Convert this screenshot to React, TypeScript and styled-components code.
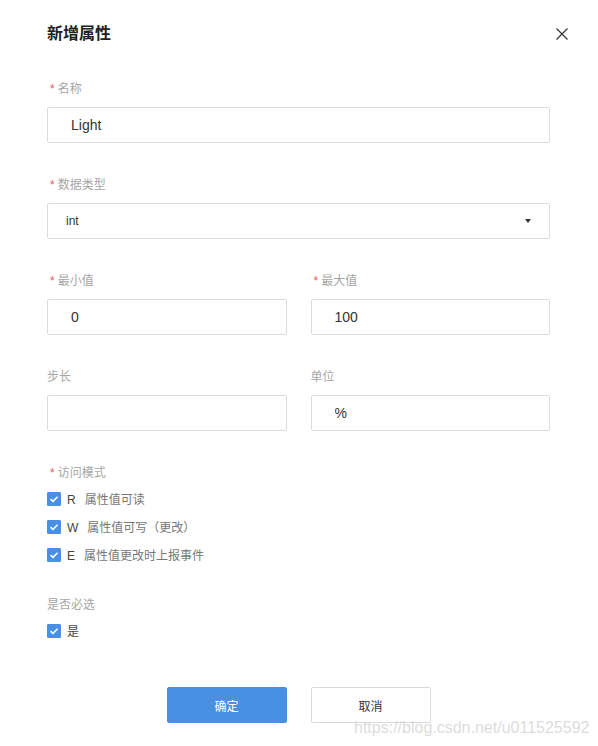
import React, { useState } from "react";
import styled, { createGlobalStyle } from "styled-components";

const GlobalStyle = createGlobalStyle`
  html, body {
    margin: 0;
    padding: 0;
    background: #fff;
  }
  body {
    font-family: "Liberation Sans", "Noto Sans CJK SC", sans-serif;
  }
  * {
    box-sizing: border-box;
  }
`;

function App() {
  const [modes, setModes] = useState({ R: true, W: true, E: true });
  const [required, setRequired] = useState(true);

  const toggleMode = (key: "R" | "W" | "E") =>
    setModes(prev => ({ ...prev, [key]: !prev[key] }));

  return (
    <>
      <GlobalStyle />
      <Dialog>
        <Header>
          <Title>新增属性</Title>
          <CloseBtn aria-label="close">
            <svg width="12" height="12" viewBox="0 0 12 12">
              <path d="M0.5 0.5 L11.5 11.5 M11.5 0.5 L0.5 11.5" stroke="#333" strokeWidth="1.2" fill="none" />
            </svg>
          </CloseBtn>
        </Header>

        <Form>
          <Field>
            <Label><Star>*</Star>名称</Label>
            <TextInput defaultValue="Light" />
          </Field>

          <Field>
            <Label><Star>*</Star>数据类型</Label>
            <Select>
              <span>int</span>
              <Caret />
            </Select>
          </Field>

          <Row>
            <Field>
              <Label><Star>*</Star>最小值</Label>
              <TextInput defaultValue="0" />
            </Field>
            <Field>
              <Label><Star>*</Star>最大值</Label>
              <TextInput defaultValue="100" />
            </Field>
          </Row>

          <Row>
            <Field>
              <Label>步长</Label>
              <TextInput defaultValue="" />
            </Field>
            <Field>
              <Label>单位</Label>
              <TextInput defaultValue="%" />
            </Field>
          </Row>

          <Group>
            <Label $tight><Star>*</Star>访问模式</Label>
            <CheckRow onClick={() => toggleMode("R")}>
              <Box $checked={modes.R}><Tick /></Box>
              <Caption><Code>R</Code>属性值可读</Caption>
            </CheckRow>
            <CheckRow onClick={() => toggleMode("W")}>
              <Box $checked={modes.W}><Tick /></Box>
              <Caption><Code>W</Code>属性值可写（更改）</Caption>
            </CheckRow>
            <CheckRow onClick={() => toggleMode("E")}>
              <Box $checked={modes.E}><Tick /></Box>
              <Caption><Code>E</Code>属性值更改时上报事件</Caption>
            </CheckRow>
          </Group>

          <Group>
            <Label $tight>是否必选</Label>
            <CheckRow onClick={() => setRequired(v => !v)}>
              <Box $checked={required}><Tick /></Box>
              <Caption><Code>是</Code></Caption>
            </CheckRow>
          </Group>
        </Form>

        <Footer>
          <Button $primary>确定</Button>
          <Button>取消</Button>
        </Footer>

        <Watermark>https://blog.csdn.net/u011525592</Watermark>
      </Dialog>
    </>
  );
}

function Tick() {
  return (
    <svg width="10" height="8" viewBox="0 0 10 8">
      <path d="M1.5 4.2 L4 6.4 L8.6 1.8" stroke="#fff" strokeWidth="1.6" fill="none" />
    </svg>
  );
}

export default App;

const Dialog = styled.div`
  position: relative;
  width: 598px;
  height: 746px;
  background: #fff;
  padding-left: 47px;
  padding-right: 48px;
  overflow: hidden;
`;

const Header = styled.div`
  height: 68px;
  display: flex;
  align-items: center;
  justify-content: space-between;
  margin-right: -18px;
`;

const Title = styled.div`
  font-size: 16px;
  font-weight: bold;
  color: #222;
  line-height: 20px;
`;

const CloseBtn = styled.button`
  width: 12px;
  height: 12px;
  padding: 0;
  border: none;
  background: none;
  display: flex;
  cursor: pointer;
`;

const Form = styled.div`
  padding-top: 11px;
  display: flex;
  flex-direction: column;
`;

const Row = styled.div`
  display: grid;
  grid-template-columns: 1fr 1fr;
  column-gap: 24px;
`;

const Field = styled.div`
  display: flex;
  flex-direction: column;
  margin-bottom: 32px;
`;

const Label = styled.div<{ $tight?: boolean }>`
  height: 18px;
  line-height: 20px;
  font-size: 12px;
  color: #a6a6a6;
  margin-bottom: ${p => (p.$tight ? "4px" : "10px")};
`;

const Star = styled.span`
  color: #e25c5c;
  margin: 0 3px 0 3px;
`;

const TextInput = styled.input`
  height: 36px;
  width: 100%;
  border: 1px solid #dcdcdc;
  border-radius: 2px;
  padding: 0 0 0 23px;
  font-family: "Liberation Sans", "Noto Sans CJK SC", sans-serif;
  font-size: 14px;
  color: #333;
  outline: none;
`;

const Select = styled.div`
  height: 36px;
  border: 1px solid #dcdcdc;
  border-radius: 2px;
  padding: 0 18px 0 18px;
  display: flex;
  align-items: center;
  justify-content: space-between;
  font-size: 12px;
  color: #333;
`;

const Caret = styled.span`
  width: 0;
  height: 0;
  border-left: 3.5px solid transparent;
  border-right: 3.5px solid transparent;
  border-top: 4px solid #333;
`;

const Group = styled.div`
  display: flex;
  flex-direction: column;
  margin-bottom: 26px;
  &:last-child {
    margin-bottom: 0;
  }
`;

const CheckRow = styled.div`
  height: 28px;
  display: flex;
  align-items: center;
  cursor: pointer;
`;

const Box = styled.span<{ $checked: boolean }>`
  width: 14px;
  height: 14px;
  flex-shrink: 0;
  border-radius: 1px;
  display: flex;
  align-items: center;
  justify-content: center;
  background: ${p => (p.$checked ? "#4a90e2" : "#fff")};
  border: 1px solid ${p => (p.$checked ? "#4a90e2" : "#ccc")};
  margin-right: 6px;
  svg {
    visibility: ${p => (p.$checked ? "visible" : "hidden")};
  }
`;

const Caption = styled.span`
  font-size: 12px;
  line-height: 16px;
  color: #777;
  padding-top: 1px;
`;

const Code = styled.span`
  color: #444;
  margin-right: 9px;
`;

const Footer = styled.div`
  margin-top: 42px;
  display: flex;
  justify-content: center;
  gap: 24px;
`;

const Button = styled.button<{ $primary?: boolean }>`
  width: 120px;
  height: 36px;
  border-radius: 2px;
  font-family: "Liberation Sans", "Noto Sans CJK SC", sans-serif;
  font-size: 12px;
  cursor: pointer;
  background: ${p => (p.$primary ? "#4a90e2" : "#fff")};
  color: ${p => (p.$primary ? "#fff" : "#333")};
  border: 1px solid ${p => (p.$primary ? "#4a90e2" : "#d9d9d9")};
`;

const Watermark = styled.div`
  position: absolute;
  left: 354px;
  top: 718px;
  font-family: "Liberation Sans", sans-serif;
  font-size: 16px;
  line-height: 20px;
  color: rgba(205, 205, 205, 0.7);
  pointer-events: none;
`;
